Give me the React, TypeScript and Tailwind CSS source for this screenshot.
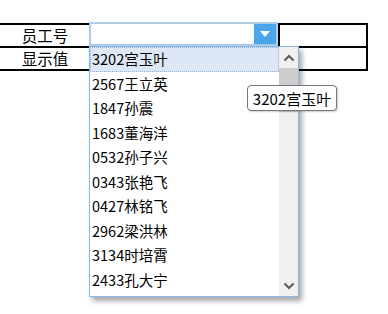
import React from "react";

const items = [
  "3202宫玉叶",
  "2567王立英",
  "1847孙震",
  "1683董海洋",
  "0532孙子兴",
  "0343张艳飞",
  "0427林铭飞",
  "2962梁洪林",
  "3134时培霄",
  "2433孔大宁",
];

const font = { fontFamily: '"Noto Sans CJK SC", "Noto Sans", sans-serif' };

function Chevron({ up }: { up?: boolean }) {
  return (
    <svg width="12" height="8" viewBox="0 0 12 8">
      <path
        d={up ? "M1.5 6.5 L6 2 L10.5 6.5" : "M1.5 1.5 L6 6 L10.5 1.5"}
        fill="none"
        stroke="#606060"
        strokeWidth="2.2"
      />
    </svg>
  );
}

export default function App() {
  return (
    <div className="relative w-[388px] h-[314px] bg-white text-black" style={font}>
      <div className="pt-[23px]">
        {/* table */}
        <div className="w-[368px] border-t-2 border-black">
          <div className="flex h-[23px] border-b-2 border-black">
            <div className="w-[90px] flex items-center justify-center text-[15.5px] leading-none">
              员工号
            </div>
            <div className="w-[188px]" />
            <div className="flex-1 border-l-2 border-r-2 border-black" />
          </div>
          <div className="flex h-[23px] border-b-2 border-black">
            <div className="w-[90px] flex items-center justify-center text-[15.5px] leading-none">
              显示值
            </div>
            <div className="w-[188px]" />
            <div className="flex-1 border-l-2 border-r-2 border-black" />
          </div>
        </div>
      </div>

      {/* combo box */}
      <div className="absolute left-[89px] top-[22px] w-[189px] h-[24px] bg-white border-2 border-[#aecbe8] flex justify-end">
        <div className="w-[22px] h-full bg-[#4aa5ec] flex items-center justify-center">
          <svg width="10" height="6" viewBox="0 0 10 6">
            <path d="M0 0 L10 0 L5 6 Z" fill="#ffffff" />
          </svg>
        </div>
      </div>

      {/* dropdown list */}
      <div className="absolute left-[89px] top-[46px] w-[210px] h-[251px] bg-white border border-[#8ab8e6] shadow-[3px_4px_5px_rgba(0,0,0,0.35)] flex">
        <div className="flex-1 flex flex-col">
          {items.map((t, i) => (
            <div
              key={t}
              className={
                i === 0
                  ? "h-[24.5px] flex items-center pl-px text-[14.5px] leading-none bg-[#dde7f5] border border-dotted border-[#8fb2de]"
                  : "h-[24.5px] flex items-center pl-[2px] text-[14.5px] leading-none"
              }
            >
              {t}
            </div>
          ))}
        </div>
        {/* scrollbar */}
        <div className="w-[19px] bg-[#f0f0f0] flex flex-col">
          <div className="h-[21px] flex items-center justify-center">
            <Chevron up />
          </div>
          <div className="h-[44px] bg-[#cdcdcd]" />
          <div className="flex-1" />
          <div className="h-[21px] flex items-center justify-center">
            <Chevron />
          </div>
        </div>
      </div>

      {/* tooltip */}
      <div className="absolute left-[247px] top-[85px] w-[90px] h-[26px] bg-white border border-[#767676] rounded-[4px] shadow-[1px_1px_2px_rgba(0,0,0,0.2)] flex items-center justify-center text-[15px] leading-none">
        3202宫玉叶
      </div>
    </div>
  );
}
